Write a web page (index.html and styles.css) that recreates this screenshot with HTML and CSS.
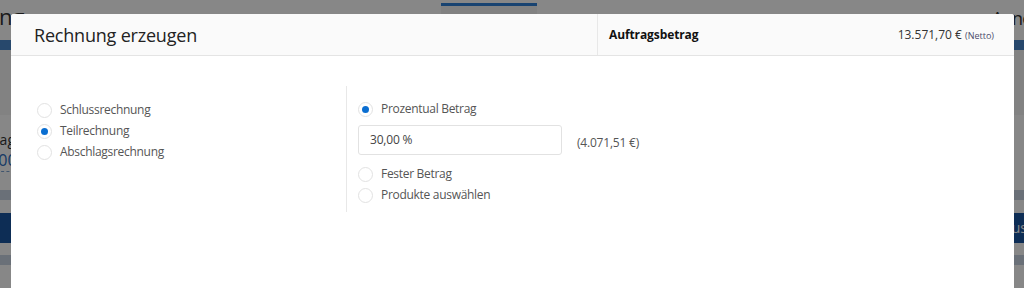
FILE: index.html
```html
<!DOCTYPE html>
<html lang="de">
<head>
    <meta charset="UTF-8">
    <title>Rechnung erzeugen</title>
    <link rel="stylesheet" href="styles.css">
</head>
<body>
    <!-- Page behind the dialog -->
    <div class="page">
        <div class="page-top">
            <span class="page-title">Rechnung</span>
            <span class="tab-active"></span>
            <span class="page-title-right">Anno</span>
        </div>
        <div class="page-bar"></div>
        <div class="page-fields">
            <div class="field-label">Betrag</div>
            <div class="field-value">1000</div>
        </div>
        <div class="page-stripe"></div>
        <div class="page-button">Plus</div>
        <div class="page-stripe second"></div>
    </div>
    <div class="overlay"></div>

    <!-- Dialog -->
    <div class="modal">
        <div class="modal-header">
            <h1 class="modal-title">Rechnung erzeugen</h1>
            <div class="modal-sum">
                <span class="sum-label">Auftragsbetrag</span>
                <span class="sum-value">13.571,70 € <small>(Netto)</small></span>
            </div>
        </div>
        <div class="modal-body">
            <div class="col-left">
                <label class="radio"><span class="dot"></span>Schlussrechnung</label>
                <label class="radio"><span class="dot checked"></span>Teilrechnung</label>
                <label class="radio"><span class="dot"></span>Abschlagsrechnung</label>
            </div>
            <div class="col-right">
                <label class="radio"><span class="dot checked"></span>Prozentual Betrag</label>
                <div class="amount-row">
                    <div class="amount-input">30,00 %</div>
                    <span class="amount-calc">(4.071,51 €)</span>
                </div>
                <label class="radio"><span class="dot"></span>Fester Betrag</label>
                <label class="radio"><span class="dot"></span>Produkte auswählen</label>
            </div>
        </div>
    </div>
</body>
</html>
```

FILE: styles.css
```css
body {
    margin: 0;
    font-family: 'Open Sans', 'Noto Sans', sans-serif;
    background: #fff;
    overflow: hidden;
    height: 288px;
    position: relative;
}
.page {
    height: 288px;
}
.page-top {
    height: 40px;
    display: flex;
    align-items: center;
    position: relative;
}
.page-title {
    font-size: 22px;
    color: #333;
    margin-left: -78px;
    margin-top: -8px;
}
.page-title-right {
    font-size: 18px;
    color: #333;
    margin-left: auto;
    margin-right: -8px;
    margin-top: -4px;
    letter-spacing: -1px;
}
.tab-active {
    position: absolute;
    left: 441px;
    top: 3px;
    width: 96px;
    height: 37px;
    border-top: 3px solid #2f7fd6;
    background: #f4f4f4;
    box-sizing: border-box;
}
.page-bar {
    height: 10px;
    background: #4a89cc;
}
.page-fields {
    height: 140px;
    padding-top: 80px;
    box-sizing: border-box;
    background: linear-gradient(#f6f6f6 0 65px, #fff 65px);
}
.field-label {
    font-size: 14px;
    color: #333;
    margin-left: -28px;
}
.field-value {
    font-size: 16px;
    color: #2a6cc0;
    margin-left: -20px;
    border-bottom: 1px dashed #7aa0d0;
    width: 40px;
}
.page-stripe {
    height: 10px;
    background: #c9d3e2;
}
.page-stripe.second {
    margin-top: 12px;
}
.page-button {
    height: 30px;
    margin-top: 13px;
    background: #1a55a0;
    color: #fff;
    font-size: 14px;
    line-height: 30px;
    text-align: right;
    margin-right: -3px;
}
.overlay {
    position: absolute;
    inset: 0;
    background: rgba(0, 0, 0, 0.47);
}
.modal {
    position: absolute;
    left: 11px;
    top: 14px;
    width: 1003px;
    height: 274px;
    background: #fff;
    border-radius: 3px 3px 0 0;
}
.modal-header {
    display: flex;
    height: 41px;
    background: #fafafa;
    border-bottom: 1px solid #e4e4e4;
    border-radius: 3px 3px 0 0;
}
.modal-title {
    flex: 1;
    margin: 0;
    padding-left: 23px;
    font-size: 18px;
    font-weight: 400;
    line-height: 43px;
    color: #222;
    letter-spacing: -0.2px;
}
.modal-sum {
    width: 417px;
    border-left: 1px solid #e8e8e8;
    display: flex;
    align-items: center;
    justify-content: space-between;
    padding: 0 20px 0 11px;
    box-sizing: border-box;
}
.sum-label {
    font-size: 12px;
    font-weight: 700;
    color: #111;
    letter-spacing: -0.1px;
}
.sum-value {
    font-size: 12px;
    color: #333;
}
.sum-value small {
    font-size: 9px;
    color: #4b4b6b;
}
.modal-body {
    display: flex;
    padding-top: 30px;
}
.col-left {
    width: 335px;
    padding: 16px 0 0 26px;
    box-sizing: border-box;
    display: flex;
    flex-direction: column;
    gap: 5px;
}
.col-right {
    border-left: 1px solid #e8e8e8;
    padding: 15px 0 9px 11px;
    display: flex;
    flex-direction: column;
    gap: 5px;
}
.radio {
    display: flex;
    align-items: center;
    gap: 8px;
    font-size: 12px;
    line-height: 16px;
    color: #555;
    letter-spacing: -0.3px;
}
.dot {
    width: 15px;
    height: 15px;
    border: 1px solid #e2e2e2;
    border-radius: 50%;
    box-sizing: border-box;
    position: relative;
    background: #fff;
}
.dot.checked::after {
    content: "";
    position: absolute;
    left: 3px;
    top: 3px;
    width: 7px;
    height: 7px;
    border-radius: 50%;
    background: #0a6ed1;
}
.amount-row {
    display: flex;
    align-items: center;
    margin: 3px 0 6px;
}
.amount-input {
    width: 204px;
    height: 30px;
    border: 1px solid #e2e2e2;
    border-radius: 3px;
    box-sizing: border-box;
    padding-left: 11px;
    font-size: 12px;
    line-height: 28px;
    color: #444;
    letter-spacing: -0.2px;
}
.amount-calc {
    margin-left: 15px;
    font-size: 12px;
    color: #555;
    margin-top: 4px;
    letter-spacing: -0.2px;
}
```
